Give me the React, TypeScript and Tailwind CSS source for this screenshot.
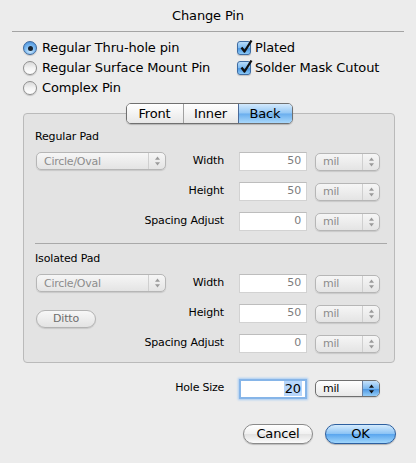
import clsx from 'clsx'

const ROWS = [
  { label: 'Width', value: '50' },
  { label: 'Height', value: '50' },
  { label: 'Spacing Adjust', value: '0' },
]

function Arrows({ active }: { active?: boolean }) {
  const c = active ? '#111' : '#9a9a9a'
  return (
    <svg width="7" height="10" viewBox="0 0 7 10">
      <path d="M3.5 0.5 L6 3.8 H1 Z" fill={c} />
      <path d="M3.5 9.5 L6 6.2 H1 Z" fill={c} />
    </svg>
  )
}

function Radio({ on }: { on?: boolean }) {
  return (
    <span
      className={clsx(
        'w-[14px] h-[14px] rounded-full border flex items-center justify-center shadow-[0_1px_1px_rgba(0,0,0,0.18)] shrink-0',
        on
          ? 'border-[#3b679c] bg-[radial-gradient(circle_at_50%_75%,#cbe7fd_0%,#79b8f1_50%,#3d84d2_100%)]'
          : 'border-[#8f8f8f] bg-linear-to-b from-[#d9d9d9] via-[#f3f3f3] to-white'
      )}
    >
      {on && <span className="w-[5px] h-[5px] rounded-full bg-[#17222e]" />}
    </span>
  )
}

function Check() {
  return (
    <span className="relative w-[14px] h-[14px] rounded-[3px] border border-[#3e6ca3] bg-[linear-gradient(to_bottom,#b9dcfa_0%,#7ab9f1_50%,#4d97e2_55%,#8ccaf7_100%)] shadow-[0_1px_1px_rgba(0,0,0,0.18)] shrink-0">
      <svg className="absolute left-[1px] -top-[3px]" width="14" height="15" viewBox="0 0 14 15">
        <path d="M2.5 8.5 L5.5 12.5 L12.5 1.5" fill="none" stroke="#111" strokeWidth="2.3" strokeLinejoin="round" />
      </svg>
    </span>
  )
}

function PopUp({ text, className, active }: { text: string; className?: string; active?: boolean }) {
  return (
    <div
      className={clsx(
        'flex items-center rounded-[5px] border shadow-[0_1px_1px_rgba(0,0,0,0.12)] overflow-hidden text-[11px] tracking-[-0.25px]',
        active
          ? 'border-[#6f6f6f] bg-linear-to-b from-white to-[#e8e8e8] text-black'
          : 'border-[#b6b6b6] bg-linear-to-b from-[#f6f6f6] to-[#e4e4e4] text-[#8c8c8c]',
        className
      )}
    >
      <span className="flex-1 pl-[7px] leading-none">{text}</span>
      <span
        className={clsx(
          'h-full w-[17px] flex items-center justify-center border-l',
          active
            ? 'border-[#6a7fa0] bg-[linear-gradient(to_bottom,#c6e2fb_0%,#7db9f0_50%,#4f98e2_55%,#93ccf7_100%)]'
            : 'border-[#cfcfcf]'
        )}
      >
        <Arrows active={active} />
      </span>
    </div>
  )
}

function Field({ value }: { value: string }) {
  return (
    <div className="ml-[15px] w-[68px] h-[19px] bg-white border border-[#d2d2d2] border-t-[#bdbdbd] flex items-center justify-end pr-[5px] text-[11px] text-[#7d7d7d]">
      {value}
    </div>
  )
}

function PadSection({ title, ditto }: { title: string; ditto?: boolean }) {
  return (
    <div>
      <div className="h-[14px] pl-[11px] text-[11px] leading-[14px]">{title}</div>
      <div className="mt-[8px] flex pl-[12px]">
        <div className="w-[130px] flex flex-col">
          <PopUp text="Circle/Oval" className="h-[18px]" />
          {ditto && (
            <div className="mt-[18px] w-[60px] h-[18px] rounded-full border border-[#b3b3b3] bg-linear-to-b from-[#f7f7f7] to-[#e3e3e3] shadow-[0_1px_1px_rgba(0,0,0,0.12)] flex items-center justify-center text-[11px] text-[#6d6d6d]">
              Ditto
            </div>
          )}
        </div>
        <div className="flex flex-col gap-[11px]">
          {ROWS.map((r) => (
            <div key={r.label} className="h-[19px] flex items-center">
              <span className="w-[58px] flex justify-end whitespace-nowrap text-[11px]">{r.label}</span>
              <Field value={r.value} />
              <PopUp text="mil" className="ml-[8px] w-[65px] h-[18px]" />
            </div>
          ))}
        </div>
      </div>
    </div>
  )
}

export default function App() {
  return (
    <div className="w-[416px] h-[463px] bg-[#ececec] text-black font-['DejaVu_Sans',sans-serif] tracking-[-0.15px] flex flex-col">
      <div className="h-[31px] flex items-center justify-center text-[13px]">Change Pin</div>
      <div className="mx-[12px] h-px bg-[#a4a4a4]" />

      <div className="mt-[6px] flex pl-[23px] text-[13px]">
        <div className="w-[214px] flex flex-col">
          <label className="h-[20px] flex items-center gap-[5px]"><Radio on />Regular Thru-hole pin</label>
          <label className="h-[20px] flex items-center gap-[5px]"><Radio />Regular Surface Mount Pin</label>
          <label className="h-[20px] flex items-center gap-[5px]"><Radio />Complex Pin</label>
        </div>
        <div className="flex flex-col">
          <label className="h-[20px] flex items-center gap-[4px]"><Check />Plated</label>
          <label className="h-[20px] flex items-center gap-[4px]"><Check />Solder Mask Cutout</label>
        </div>
      </div>

      <div className="ml-[23px] w-[372px] mt-[5px] flex flex-col">
        <div className="relative z-10 mx-auto flex h-[21px] rounded-[5px] border border-[#707070] overflow-hidden shadow-[0_1px_1px_rgba(0,0,0,0.2)] text-[13px]">
          <div className="w-[56px] flex items-center justify-center bg-linear-to-b from-white to-[#e7e7e7]">Front</div>
          <div className="w-px bg-[#a0a0a0]" />
          <div className="w-[54px] flex items-center justify-center bg-linear-to-b from-white to-[#e7e7e7]">Inner</div>
          <div className="w-px bg-[#4a6a98]" />
          <div className="w-[53px] flex items-center justify-center bg-[linear-gradient(to_bottom,#d3e9fc_0%,#93c7f5_48%,#6aaeee_52%,#a9d8fb_100%)]">Back</div>
        </div>

        <div className="-mt-[11px] border border-[#bababa] rounded-[4px] bg-[#e3e3e3] pt-[16px] pb-[9px]">
          <PadSection title="Regular Pad" />
          <div className="mt-[12px] ml-[11px] mr-[7px] h-px bg-[#a9a9a9]" />
          <div className="mt-[8px]">
            <PadSection title="Isolated Pad" ditto />
          </div>
        </div>
      </div>

      <div className="mt-[15px] h-[21px] flex items-center">
        <span className="w-[224px] flex justify-end text-[11px] tracking-[-0.25px]">Hole Size</span>
        <div className="ml-[15px] w-[68px] h-[20px] bg-white border-2 border-[#86b5e8] shadow-[0_0_2px_1px_#a8ccf3] flex items-center justify-end pr-[3px] text-[13px]">
          <span className="bg-[#b7d6fb] px-[1px] leading-[15px]">20</span>
        </div>
        <PopUp text="mil" active className="ml-[8px] w-[65px] h-[17px]" />
      </div>

      <div className="mt-[25px] flex justify-end pr-[20px] gap-[12px] text-[13px]">
        <div className="w-[70px] h-[20px] rounded-full border border-[#8a8a8a] bg-[linear-gradient(to_bottom,#ffffff_0%,#f1f1f1_48%,#e2e2e2_52%,#fbfbfb_100%)] shadow-[0_1px_1px_rgba(0,0,0,0.2)] flex items-center justify-center">
          Cancel
        </div>
        <div className="w-[71px] h-[20px] rounded-full border border-[#2d5f9f] bg-[linear-gradient(to_bottom,#d5ebfd_0%,#8dc4f5_48%,#5aa6ee_52%,#a0d6fc_100%)] shadow-[0_1px_1px_rgba(0,0,0,0.25)] flex items-center justify-center">
          OK
        </div>
      </div>
    </div>
  )
}
